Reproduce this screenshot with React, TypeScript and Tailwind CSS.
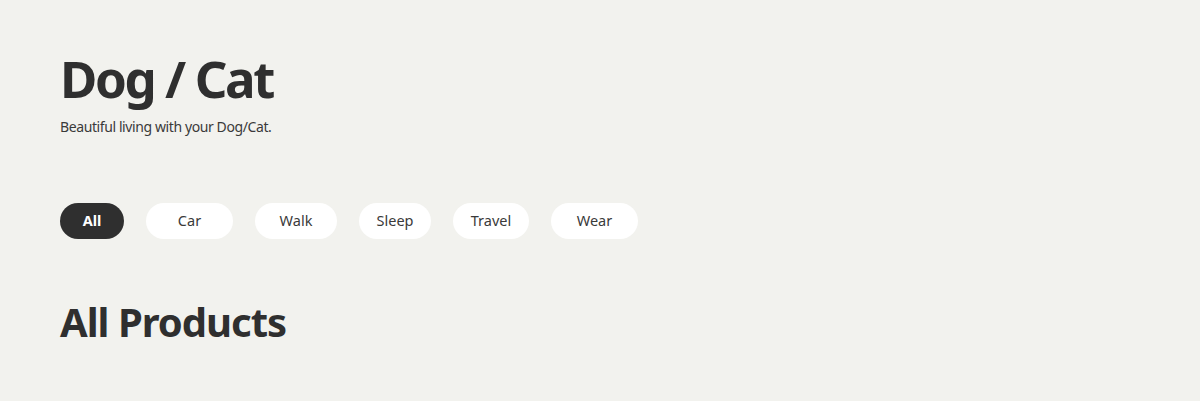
const tabs = [
  { label: "All", w: "w-[64px]", active: true },
  { label: "Car", w: "w-[87px]" },
  { label: "Walk", w: "w-[82px]" },
  { label: "Sleep", w: "w-[72px]" },
  { label: "Travel", w: "w-[76px]" },
  { label: "Wear", w: "w-[87px]" },
];

export default function App() {
  return (
    <div className="min-h-[401px] bg-[#f2f2ee] px-[60px] pt-[47px] text-[#2f2f2f] [font-family:'Noto_Sans',sans-serif]">
      <h1 className="text-[51px] font-bold leading-[63px] tracking-[-2.4px]">Dog / Cat</h1>
      <p className="mt-[8px] text-[14px] leading-[18px] tracking-[-0.4px] text-[#3a3a3a]">
        Beautiful living with your Dog/Cat.
      </p>
      <div className="mt-[67px] flex gap-[22px]">
        {tabs.map((t) => (
          <button
            key={t.label}
            className={`${t.w} h-[36px] rounded-full text-[14.5px] ${
              t.active ? "bg-[#2f2f2f] font-bold text-white" : "bg-white text-[#3a3a3a]"
            }`}
          >
            {t.label}
          </button>
        ))}
      </div>
      <h2 className="mt-[59px] text-[40px] font-bold leading-[48px] tracking-[-1px]">All Products</h2>
    </div>
  );
}
